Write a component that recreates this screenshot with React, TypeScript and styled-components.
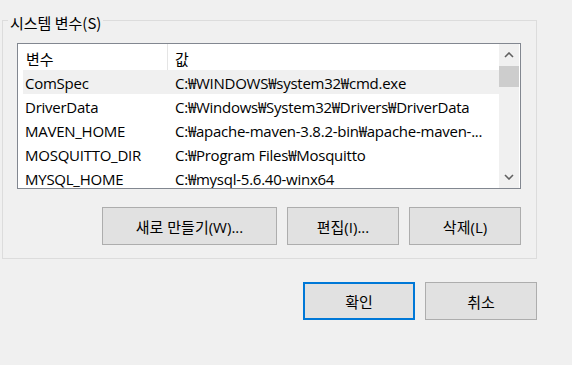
import React from 'react';
import styled, { createGlobalStyle } from 'styled-components';

const GlobalStyle = createGlobalStyle`
  html, body {
    margin: 0;
    background-color: #f0f0f0;
  }
  body {
    font-family: 'Open Sans', 'Noto Sans CJK KR', sans-serif;
    font-size: 15px;
    color: #000;
  }
`;

const Page = styled.div`
  width: 572px;
  height: 365px;
  box-sizing: border-box;
  padding: 10px 35px 0 2px;
`;

const GroupBox = styled.fieldset`
  margin: 0;
  padding: 0;
  border: 1px solid #dcdcdc;
  min-width: 0;
`;

const Legend = styled.legend`
  margin-left: 5px;
  padding: 5px 2px 0;
  font-size: 15px;
  line-height: 16px;
  font-family: 'Noto Sans CJK KR', sans-serif;
`;

const GroupBody = styled.div`
  padding: 12px 15px 13px 14px;
`;

const ListBox = styled.div`
  display: flex;
  height: 144px;
  border: 1px solid #828790;
  background-color: #fff;
  overflow: hidden;
`;

const Table = styled.div`
  flex: 1;
  min-width: 0;
  padding-left: 5px;
`;

const Header = styled.div`
  display: flex;
  height: 26px;
  align-items: center;
`;

const HeaderCell = styled.div<{ $first?: boolean }>`
  box-sizing: border-box;
  height: 26px;
  line-height: 30px;
  font-family: 'Noto Sans CJK KR', sans-serif;
  font-size: 15px;
  width: ${({ $first }) => ($first ? '145px' : 'auto')};
  padding-left: ${({ $first }) => ($first ? '3px' : '7px')};
  border-right: ${({ $first }) => ($first ? '1px solid #e5e5e5' : 'none')};
`;

const Row = styled.div<{ $selected?: boolean }>`
  display: flex;
  height: 24px;
  line-height: 27px;
  letter-spacing: -0.25px;
  background-color: ${({ $selected }) => ($selected ? '#f0f0f0' : 'transparent')};
  white-space: nowrap;
`;

const NameCell = styled.div`
  width: 145px;
  flex-shrink: 0;
  box-sizing: border-box;
  padding-left: 2px;
  overflow: hidden;
`;

const ValueCell = styled.div`
  flex: 1;
  padding-left: 7px;
  overflow: hidden;
`;

const ScrollBar = styled.div`
  width: 20px;
  margin-right: 1px;
  display: flex;
  flex-direction: column;
  background-color: #f0f0f0;
`;

const ArrowButton = styled.div`
  height: 22px;
  display: flex;
  align-items: center;
  justify-content: center;
`;

const Thumb = styled.div`
  height: 21px;
  background-color: #cdcdcd;
`;

const Track = styled.div`
  flex: 1;
`;

const ButtonRow = styled.div<{ $outside?: boolean }>`
  display: flex;
  justify-content: flex-end;
  gap: 10px;
  margin-top: ${({ $outside }) => ($outside ? '23px' : '18px')};
`;

const Button = styled.button<{ $wide?: boolean; $default?: boolean }>`
  box-sizing: border-box;
  width: ${({ $wide }) => ($wide ? '175px' : '112px')};
  height: 38px;
  margin: 0;
  padding: 0;
  background-color: #e1e1e1;
  border: ${({ $default }) => ($default ? '2px solid #0078d7' : '1px solid #adadad')};
  font-family: 'Open Sans', 'Noto Sans CJK KR', sans-serif;
  font-size: 15px;
  color: #000;
`;

const Chevron = ({ down }: { down?: boolean }) => (
  <svg width="10" height="6" viewBox="0 0 10 6">
    <path
      d={down ? 'M1 1 L5 5 L9 1' : 'M1 5 L5 1 L9 5'}
      fill="none"
      stroke="#606060"
      strokeWidth="1.6"
    />
  </svg>
);

const rows = [
  { name: 'ComSpec', value: 'C:₩WINDOWS₩system32₩cmd.exe' },
  { name: 'DriverData', value: 'C:₩Windows₩System32₩Drivers₩DriverData' },
  { name: 'MAVEN_HOME', value: 'C:₩apache-maven-3.8.2-bin₩apache-maven-...' },
  { name: 'MOSQUITTO_DIR', value: 'C:₩Program Files₩Mosquitto' },
  { name: 'MYSQL_HOME', value: 'C:₩mysql-5.6.40-winx64' },
];

export default function App() {
  return (
    <>
      <GlobalStyle />
      <Page>
        <GroupBox>
          <Legend>시스템 변수(S)</Legend>
          <GroupBody>
            <ListBox>
              <Table>
                <Header>
                  <HeaderCell $first>변수</HeaderCell>
                  <HeaderCell>값</HeaderCell>
                </Header>
                {rows.map((r, i) => (
                  <Row key={r.name} $selected={i === 0}>
                    <NameCell>{r.name}</NameCell>
                    <ValueCell>{r.value}</ValueCell>
                  </Row>
                ))}
              </Table>
              <ScrollBar>
                <ArrowButton>
                  <Chevron />
                </ArrowButton>
                <Thumb />
                <Track />
                <ArrowButton>
                  <Chevron down />
                </ArrowButton>
              </ScrollBar>
            </ListBox>
            <ButtonRow>
              <Button $wide>새로 만들기(W)...</Button>
              <Button>편집(I)...</Button>
              <Button>삭제(L)</Button>
            </ButtonRow>
          </GroupBody>
        </GroupBox>
        <ButtonRow $outside>
          <Button $default>확인</Button>
          <Button>취소</Button>
        </ButtonRow>
      </Page>
    </>
  );
}
